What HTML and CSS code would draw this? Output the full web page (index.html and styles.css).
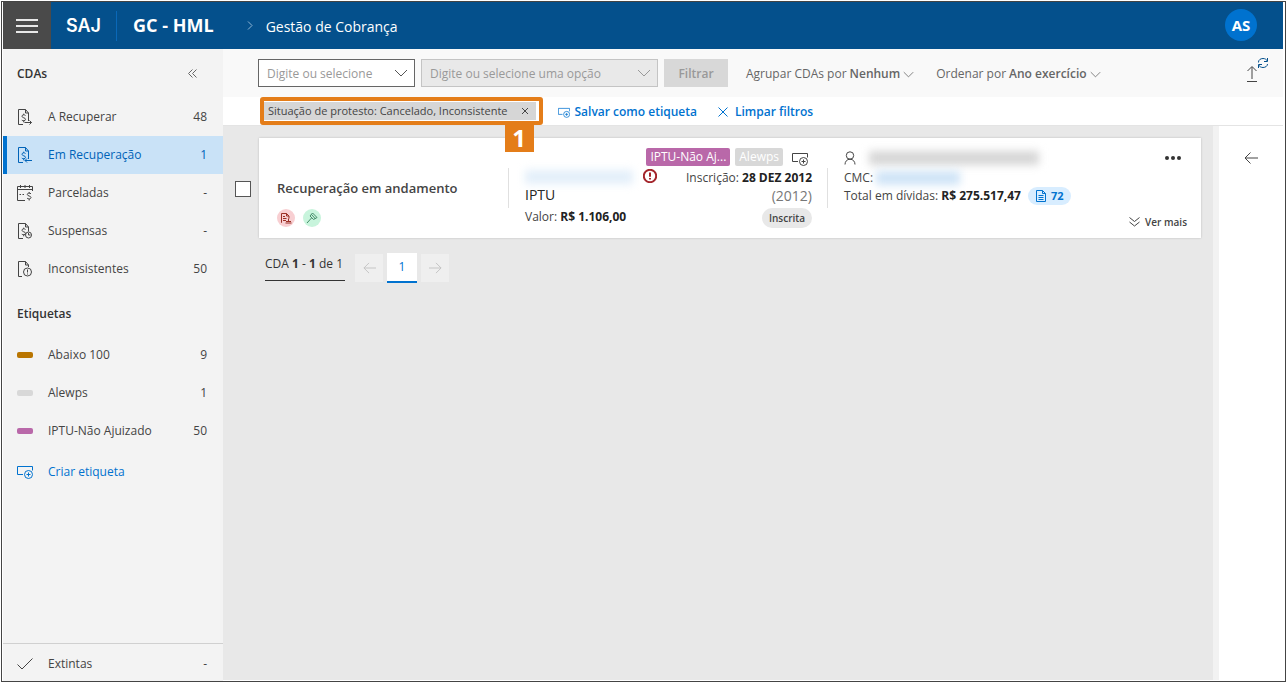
FILE: index.html
```html
<!DOCTYPE html>
<html lang="pt-BR">
<head>
<meta charset="utf-8">
<meta name="viewport" content="width=device-width, initial-scale=1">
<title>Gestão de Cobrança</title>
<link rel="stylesheet" href="styles.css">
</head>
<body>
<svg class="defs" aria-hidden="true">
  <symbol id="chevron" viewBox="0 0 14 8"><path d="M1 1l6 6 6-6"/></symbol>
  <symbol id="tag-add" viewBox="0 0 16 14"><path d="M6 9.500H.5v-8h15v4"/><circle cx="11.500" cy="9.500" r="4"/><path d="M9.500 9.500h4M11.500 7.500v4"/></symbol>
  <symbol id="arrow" viewBox="0 0 14 12"><path d="M14 6H1M6.500.5L1 6l5.500 5.500"/></symbol>
  <symbol id="doc" viewBox="0 0 16 18"><path d="M6 16.500H1.500v-15h7l3 3.500v4.500M8.500 1.500V5h3"/><path d="M8.500 7.500c-1-1-3.500-1-3.500.8s3.500 1.200 3.500 3-2.700 1.800-3.700.8M6.700 5.700v1.200M6.700 13v1.300"/></symbol>
</svg>
<div class="app">
  <header class="header">
    <button class="menu" aria-label="Menu"><span></span><span></span><span></span></button>
    <span class="logo">SAJ</span>
    <span class="product">GC - HML</span>
    <svg class="crumb" width="6" height="9" viewBox="0 0 6 9"><path d="M1 .5l4 4-4 4"/></svg>
    <h1 class="title">Gestão de Cobrança</h1>
    <button class="avatar">AS</button>
  </header>
  <div class="body">
    <nav class="sidebar">
      <div class="side-head">
        <h2 class="side-title">CDAs</h2>
        <button class="collapse" aria-label="Recolher"><svg class="icon" width="9" height="9" viewBox="0 0 9 9"><path d="M4.500.5l-4 4 4 4M8.500.5l-4 4 4 4"/></svg></button>
      </div>
      <a class="item" href="#"><svg class="icon" width="16" height="18" viewBox="0 0 16 18"><use href="#doc"/><path d="M11.500 5v8M7.500 14.500h7M12.500 12.500l2 2-2 2"/></svg><span>A Recuperar</span><span class="count">48</span></a>
      <a class="item active" href="#"><svg class="icon" width="16" height="18" viewBox="0 0 16 18"><use href="#doc"/><path d="M11.500 5v8M15 14.500H8M10 12.500l-2 2 2 2"/></svg><span>Em Recuperação</span><span class="count">1</span></a>
      <a class="item" href="#"><svg class="icon" width="16" height="18" viewBox="0 0 16 18"><path d="M8 16.500H.5v-14h15v4.500M.5 5.500h15M3.500 1v3M8 1v3M12.500 1v3M2.500 10.500H4M5.500 10.500H7"/><path d="M14 9.800c-1-1-3.700-1-3.700.7s3.700 1.300 3.700 3-2.900 1.700-3.900.7M12.200 8v1.200M12.200 15v1.500"/></svg><span>Parceladas</span><span class="count">-</span></a>
      <a class="item" href="#"><svg class="icon" width="16" height="18" viewBox="0 0 16 18"><use href="#doc"/><circle cx="11.500" cy="13" r="3"/><path d="M11.500 11v2h2"/></svg><span>Suspensas</span><span class="count">-</span></a>
      <a class="item" href="#"><svg class="icon" width="16" height="18" viewBox="0 0 16 18"><path d="M5 16.500H1.500v-15h7l3 3.500v2M8.500 1.500V5h3"/><circle cx="10.500" cy="12" r="4"/><path d="M10.500 9.500v3M10.500 13.500v1"/></svg><span>Inconsistentes</span><span class="count">50</span></a>
      <h2 class="side-title labels-title">Etiquetas</h2>
      <a class="item" href="#"><span class="swatch amber"></span><span>Abaixo 100</span><span class="count">9</span></a>
      <a class="item" href="#"><span class="swatch gray"></span><span>Alewps</span><span class="count">1</span></a>
      <a class="item" href="#"><span class="swatch purple"></span><span>IPTU-Não Ajuizado</span><span class="count">50</span></a>
      <button class="item create"><svg class="icon" width="16" height="14"><use href="#tag-add"/></svg><span>Criar etiqueta</span></button>
      <a class="item closed" href="#"><svg class="icon" width="16" height="12" viewBox="0 0 16 12"><path d="M.5 6.500l4.500 4.500L15.500.5"/></svg><span>Extintas</span><span class="count">-</span></a>
    </nav>
    <main class="main">
      <div class="toolbar">
        <div class="select field"><select aria-label="Filtro"><option>Digite ou selecione</option></select><svg class="icon" width="14" height="8"><use href="#chevron"/></svg></div>
        <div class="select option"><select aria-label="Opção" disabled><option>Digite ou selecione uma opção</option></select><svg class="icon" width="14" height="8"><use href="#chevron"/></svg></div>
        <button class="filter" disabled>Filtrar</button>
        <button class="sort group">Agrupar CDAs por <b>Nenhum</b><svg class="icon" width="11" height="7"><use href="#chevron"/></svg></button>
        <button class="sort">Ordenar por <b>Ano exercício</b><svg class="icon" width="11" height="7"><use href="#chevron"/></svg></button>
        <button class="export" aria-label="Exportar"><svg width="24" height="26" viewBox="0 0 24 26"><path class="up" d="M2 24.500h10M7 22V10M2.500 14L7 9.500l4.500 4.500"/><path class="sync" d="M13.500 5.500V5c0-2 2-3.500 4.500-3.500 2 0 3.500 1 4.500 2.500M22.500 1v3.500H19M22.500 7c0 2-2 3.500-4.500 3.500-2 0-3.500-1-4.500-2.500M13.500 11V7.500H17"/></svg></button>
      </div>
      <div class="filters">
        <div class="callout">
          <span class="chip">Situação de protesto: Cancelado, Inconsistente<button class="remove" aria-label="Remover"><svg class="icon" width="8" height="8" viewBox="0 0 8 8"><path d="M1 1l6 6M7 1L1 7"/></svg></button></span>
          <span class="step">1</span>
        </div>
        <button class="action"><svg class="icon" width="12" height="11"><use href="#tag-add"/></svg>Salvar como etiqueta</button>
        <button class="action clear"><svg class="icon" width="10" height="10" viewBox="0 0 10 10"><path d="M.5.5l9 9M9.500.5l-9 9"/></svg>Limpar filtros</button>
      </div>
      <div class="workspace">
        <section class="list">
          <div class="row">
            <input class="check" type="checkbox" aria-label="Selecionar CDA">
            <article class="card">
              <div class="status">
                <h3 class="status-title">Recuperação em andamento</h3>
                <div class="badges">
                  <span class="badge red"><svg class="icon" width="12" height="12" viewBox="0 0 12 12"><path d="M2 10.500H1.500v-9h5L9 4v2.500M6.500 1.500V4H9M3 4.500h2M3 6.500h3.500M3 8.500h3M8.500 6.500v3M6 9.500h5M5.500 11h6"/></svg></span>
                  <span class="badge green"><svg class="icon" width="12" height="12" viewBox="0 0 12 12"><path d="M6.500 1l4.500 4.500M5.500 2.500l4 4.500M4 4l3.500 3.500M6.500 1L4 4M11 5.500L7.500 7.500M5.500 6L1 11"/></svg></span>
                </div>
              </div>
              <div class="debt">
                <div class="debt-main">
                  <div class="line number"><span class="mask mask-number"></span><svg class="alert" width="14" height="14" viewBox="0 0 14 14"><circle cx="7" cy="7" r="6.200"/><path d="M7 3.500v4.300M7 9v1.500"/></svg></div>
                  <div class="line kind">IPTU</div>
                  <div class="line value">Valor: <b>R$ 1.106,00</b></div>
                </div>
                <div class="debt-side">
                  <div class="tags"><span class="tag purple">IPTU-Não Aj...</span><span class="tag gray">Alewps</span><button class="tag-add" aria-label="Adicionar etiqueta"><svg class="icon" width="16" height="14"><use href="#tag-add"/></svg></button></div>
                  <div class="line">Inscrição: <b>28 DEZ 2012</b></div>
                  <div class="line year">(2012)</div>
                  <span class="pill">Inscrita</span>
                </div>
              </div>
              <div class="person">
                <div class="line name"><svg class="icon" width="12" height="14" viewBox="0 0 12 14"><circle cx="6" cy="4.500" r="3.700"/><path d="M1 13.500c0-3 2-5.300 5-5.300s5 2.300 5 5.300"/></svg><span class="mask mask-name"></span><button class="more" aria-label="Mais opções"><svg width="16" height="4" viewBox="0 0 16 4"><circle cx="2" cy="2" r="2"/><circle cx="8" cy="2" r="2"/><circle cx="14" cy="2" r="2"/></svg></button></div>
                <div class="line">CMC: <span class="mask mask-cmc"></span></div>
                <div class="line total">Total em dívidas: <b>R$ 275.517,47</b><a class="docs" href="#"><svg class="icon" width="10" height="12" viewBox="0 0 10 12"><path d="M.5.5h6l3 3v8h-9zM6.500.5v3h3M2.500 5.500h5M2.500 7.500h5M2.500 9.500h5"/></svg>72</a></div>
                <button class="expand"><svg class="icon" width="11" height="10" viewBox="0 0 11 10"><path d="M.5.5l5 4 5-4M.5 5l5 4 5-4"/></svg>Ver mais</button>
              </div>
            </article>
          </div>
          <nav class="pager">
            <span class="range">CDA <b>1</b> - <b>1</b> de 1</span>
            <button class="page step-page" disabled aria-label="Anterior"><svg class="icon" width="13" height="12"><use href="#arrow"/></svg></button>
            <button class="page current">1</button>
            <button class="page step-page" disabled aria-label="Próxima"><svg class="icon flip" width="13" height="12"><use href="#arrow"/></svg></button>
          </nav>
        </section>
        <aside class="drawer"><button class="open" aria-label="Abrir painel"><svg class="icon" width="14" height="12"><use href="#arrow"/></svg></button></aside>
      </div>
    </main>
  </div>
</div>
</body>
</html>
```
FILE: styles.css
```css
* { box-sizing: border-box; }
body { margin: 0; background: #fff; color: #444; font: 12px/18px "Open Sans", "Noto Sans", sans-serif; }
button, select { font: inherit; color: inherit; }
button { display: flex; align-items: center; padding: 0; border: 0; background: none; white-space: nowrap; cursor: pointer; }
a { color: inherit; text-decoration: none; }
h1, h2, h3 { margin: 0; font-weight: 400; }
b { font-weight: 700; }
svg { flex: none; display: block; fill: none; stroke: currentColor; stroke-width: 1; }
.defs { position: absolute; width: 0; height: 0; }

.app { display: flex; flex-direction: column; min-height: calc(100vh - 2px); margin: 1px; border: 1px solid #444; padding: 0 2px 0 1px; }
.header { display: flex; align-items: center; height: 47px; background: #04508c; color: #fff; }
.menu { flex-direction: column; justify-content: center; gap: 4px; width: 48px; height: 47px; background: #4a4a4a; }
.menu span { width: 22px; height: 2px; background: #e8e8e8; }
.logo { margin-left: 15px; padding-right: 15px; border-right: 1px solid #0a68b8; font: 600 18px/30px Inter, sans-serif; }
.product { margin-left: 16px; padding-bottom: 2px; font-size: 18px; line-height: 24px; font-weight: 700; }
.crumb { margin: 0 13px 0 33px; stroke: #8fb5d4; }
.title { font-size: 14px; line-height: 20px; padding-top: 2px; }
.avatar { justify-content: center; width: 32px; height: 32px; margin: 0 26px 2px auto; border-radius: 50%; background: #0072cf; font-size: 15px; font-weight: 700; }

.body { display: flex; flex: 1; }
.sidebar { display: flex; flex-direction: column; flex: none; width: 220px; background: #f3f3f3; }
.side-head { display: flex; align-items: center; justify-content: space-between; height: 49px; padding: 0 26px 0 14px; }
.side-title { color: #333; font-size: 12px; font-weight: 600; }
.collapse { color: #666; }
.labels-title { padding: 17px 14px 13px; line-height: 18px; }
.item { display: flex; align-items: center; gap: 15px; height: 38px; padding: 0 16px 0 10px; border-left: 4px solid transparent; }
.item.active { border-color: #0072cf; background: #c9e2f7; color: #0063b8; }
.count { margin-left: auto; }
.swatch { width: 16px; height: 6px; border-radius: 2px; }
.amber { background: #b97500; }
.gray { background: #d8d8d8; }
.purple { background: #b968a9; }
.create { margin-top: 3px; color: #0072cf; }
.closed { margin-top: auto; padding: 2px 16px 0 14px; border-left: 0; border-top: 1px solid #d0d0d0; }

.main { display: flex; flex: 1; flex-direction: column; min-width: 0; padding-bottom: 1px; }
.toolbar { display: flex; align-items: center; height: 48px; padding: 0 14px 0 35px; background: #f9f9f9; }
.select { position: relative; display: flex; align-items: center; height: 28px; border: 1px solid #666; background: #fff; }
.select select { width: 100%; height: 26px; padding: 2px 30px 0 8px; border: 0; appearance: none; background: none; color: #999; opacity: 1; }
.select svg { position: absolute; right: 6px; color: #555; pointer-events: none; }
.field { width: 157px; }
.option { width: 237px; margin: 0 6px; border-color: #c4c4c4; background: #e9e9e9; }
.option svg { color: #999; }
.filter { justify-content: center; width: 64px; height: 28px; margin-right: 18px; padding-top: 2px; background: #d8d8d8; color: #999; font-weight: 600; }
.sort { gap: 3px; padding-top: 2px; color: #666; }
.sort b { font-weight: 600; }
.group { margin-right: 22px; }
.export { height: 26px; margin-left: auto; margin-bottom: 6px; }
.up { stroke: #444; }
.sync { stroke: #04508c; }

.filters { display: flex; align-items: center; height: 28px; padding-left: 37px; }
.callout { position: relative; padding: 1px 3px 1px 0; border: 4px solid #e47d19; border-radius: 3px; }
.chip { display: flex; align-items: center; height: 18px; padding: 0 7px 0 4px; background: #d6d6d6; font-size: 11px; white-space: nowrap; }
.remove { margin-left: 13px; }
.step { position: absolute; z-index: 1; top: 23px; right: 5px; width: 29px; background: #e47d19; color: #fff; font-size: 24px; line-height: 28px; font-weight: 700; text-align: center; }
.action { gap: 5px; margin-left: 15px; padding-top: 2px; color: #0072cf; font-weight: 600; }
.clear { gap: 7px; margin-left: 21px; }

.workspace { display: flex; flex: 1; border-top: 1px solid #e4e4e4; }
.list { flex: 1; min-width: 0; padding: 12px 12px 0; background: #e8e8e8; }
.drawer { flex: none; width: 70px; border-left: 6px solid #f2f2f2; background: #fff; }
.open { margin: 26px 0 0 25px; }
.row { display: flex; align-items: center; gap: 8px; }
.check { appearance: none; flex: none; width: 16px; height: 16px; margin: 2px 0 0; border: 1px solid #555; background: #fff; }
.card { display: flex; flex: 1; height: 100px; background: #fff; box-shadow: 0 0 2px #bbb; }
.status { width: 249px; padding: 40px 0 0 18px; }
.status-title { font-size: 13px; line-height: 20px; font-weight: 600; }
.badges { display: flex; gap: 8px; margin-top: 11px; }
.badge { display: grid; place-items: center; width: 18px; height: 18px; border-radius: 50%; }
.red { background: #f8cfd2; color: #9b3026; }
.green { background: #c8f4dc; color: #438c68; }
.line { display: flex; align-items: center; height: 18px; white-space: pre; }
.line b { color: #222; }
.debt { display: flex; justify-content: space-between; height: 90px; width: 320px; padding: 10px 16px 0 17px; background: linear-gradient(#e0e0e0, #e0e0e0) 0 30px / 1px 40px no-repeat, linear-gradient(#e0e0e0, #e0e0e0) right 30px / 1px 40px no-repeat; }
.debt-main { flex: none; width: 120px; padding-top: 20px; }
.debt-side { display: flex; flex-direction: column; align-items: flex-end; }
.kind { font-size: 14px; color: #222; }
.value { margin-top: 4px; }
.number { width: 132px; justify-content: space-between; }
.alert { color: #a4262c; stroke-width: 2; margin-bottom: 3px; }
.tags { display: flex; gap: 5px; margin: 0 4px 3px 0; }
.tag { padding: 0 4px; border-radius: 2px; color: #fff; white-space: nowrap; }
.tag-add { margin-left: 4px; padding-top: 3px; }
.year { color: #777; font-size: 14px; }
.pill { margin-top: 3px; padding: 0 7px; border-radius: 10px; background: #e8e8e8; font-size: 10px; line-height: 20px; font-weight: 600; }
.person { display: flex; flex: 1; flex-direction: column; padding: 11px 14px 0 16px; }
.name { gap: 13px; margin-bottom: 2px; }
.more { margin-left: auto; padding-right: 6px; }
.more svg { fill: #333; stroke: none; }
.mask { filter: blur(4px); }
.mask-number { width: 108px; height: 14px; background: #e3effa; }
.mask-name { width: 170px; height: 14px; background: #d6d6d6; }
.mask-cmc { width: 84px; height: 14px; background: #cfe4f7; }
.docs { display: flex; align-items: center; gap: 5px; height: 18px; margin-left: 7px; padding: 0 7px 0 8px; border-radius: 9px; background: #d8edff; color: #0072cf; font-size: 11px; font-weight: 700; }
.expand { gap: 5px; margin: 8px 0 0 auto; font-size: 10px; font-weight: 600; }
.pager { display: flex; align-items: center; height: 30px; margin: 15px 0 0 30px; color: #333; }
.range { align-self: flex-start; min-width: 80px; height: 28px; margin-right: 10px; padding-top: 2px; border-bottom: 1px solid #333; white-space: nowrap; }
.page { justify-content: center; width: 28px; height: 28px; background: #efefef; color: #c2c2c2; }
.current { width: 30px; height: 30px; margin: 0 4px; border-bottom: 2px solid #0072cf; background: #fff; color: #0072cf; }
.flip { transform: rotate(180deg); }
```
